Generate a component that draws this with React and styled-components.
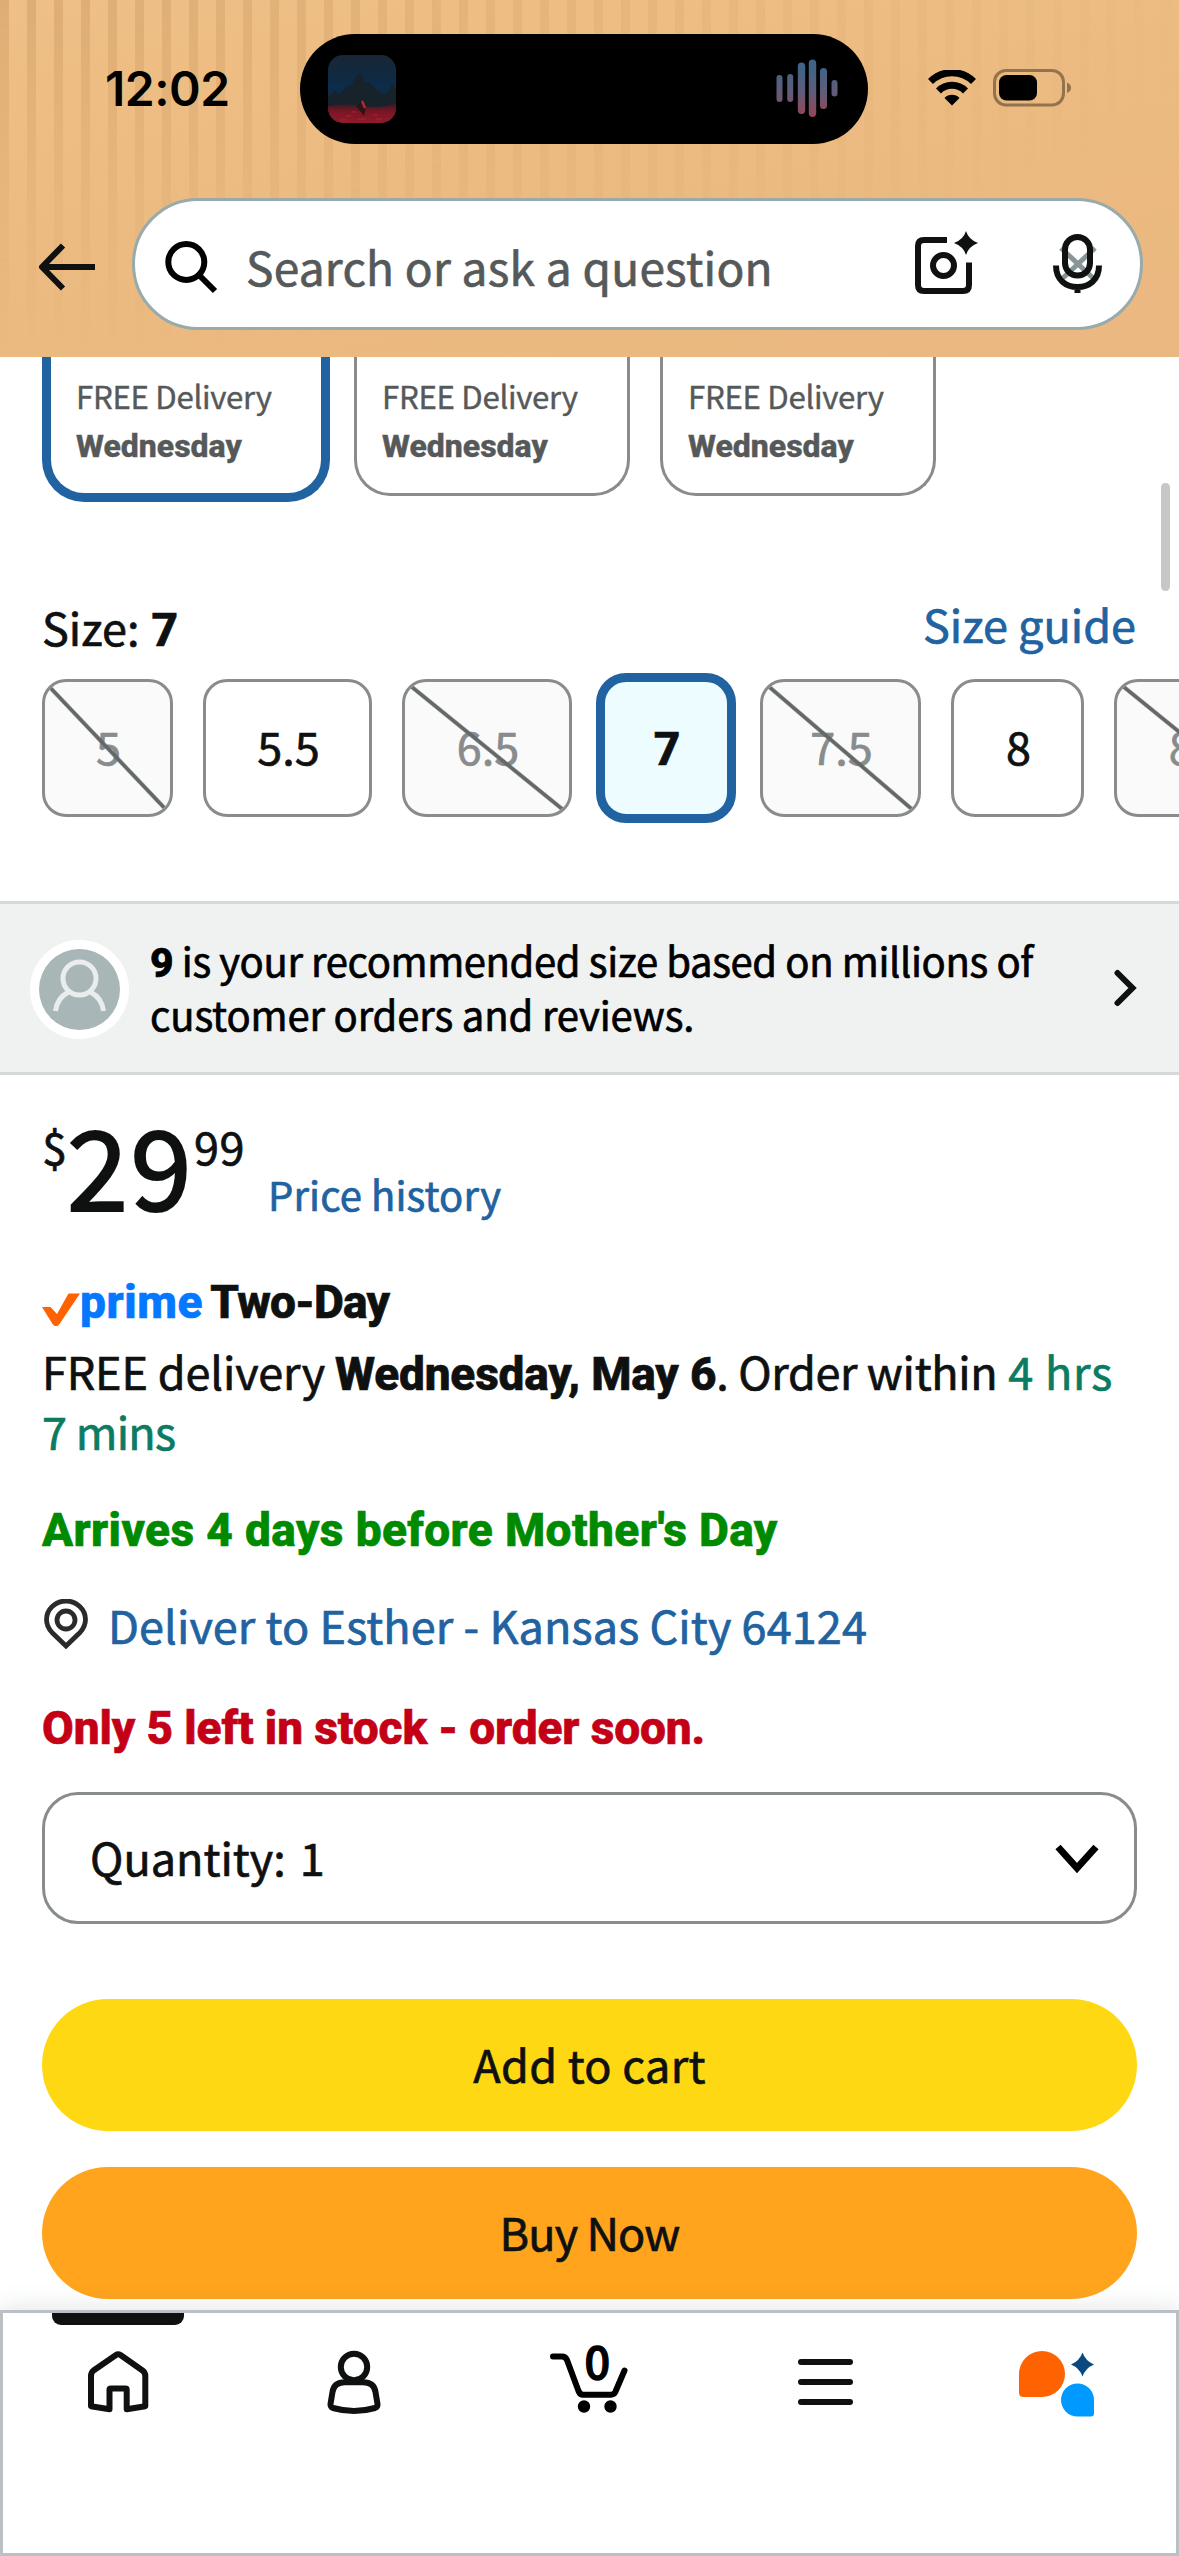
import React from 'react'
import styled, { createGlobalStyle, css } from 'styled-components'

const cards = [
  { id: 1, selected: true },
  { id: 2 },
  { id: 3 },
]

const sizes = [
  { label: '5', width: 131, unavailable: true },
  { label: '5.5', width: 169 },
  { label: '6.5', width: 170, unavailable: true },
  { label: '7', width: 128, selected: true },
  { label: '7.5', width: 161, unavailable: true },
  { label: '8', width: 133 },
  { label: '8.5', width: 170, unavailable: true },
]

// x centre, top, bottom and width of each bar
const waveBars = [
  [3.5, 16, 43, 6],
  [14.2, 15, 43, 6],
  [25.5, 3.5, 55, 7.4],
  [36.5, 0.5, 58, 7.4],
  [47.5, 9, 50, 7],
  [58.5, 21, 37.5, 6],
]

function App() {
  return (
    <>
      <GlobalStyle />
      <Screen>
        <Header>
          <StatusBar>
            <Clock>12:02</Clock>
            <Island>
              <AlbumArt />
              <Waveform />
            </Island>
            <Wifi />
            <Battery />
          </StatusBar>
          <SearchRow>
            <BackArrow />
            <SearchBox>
              <Magnifier />
              <Placeholder>Search or ask a question</Placeholder>
              <Camera />
              <Mic />
            </SearchBox>
          </SearchRow>
        </Header>

        <Cards>
          {cards.map(card => (
            <Card key={card.id} $selected={card.selected}>
              <CardText>FREE Delivery</CardText>
              <CardDay>Wednesday</CardDay>
            </Card>
          ))}
        </Cards>

        <SizeHeading>
          <SizeLabel>Size: <Bold>7</Bold></SizeLabel>
          <SizeGuide>Size guide</SizeGuide>
        </SizeHeading>
        <Sizes>
          {sizes.map(size => (
            <Size
              key={size.label}
              $width={size.width}
              $selected={size.selected}
              $unavailable={size.unavailable}
            >
              {size.label}
            </Size>
          ))}
        </Sizes>

        <Recommendation>
          <Avatar />
          <RecommendationText>
            <FirstLine><Bold>9</Bold> is your recommended size based on millions of</FirstLine>
            <SecondLine>customer orders and reviews.</SecondLine>
          </RecommendationText>
          <ChevronRight />
        </Recommendation>

        <Buybox>
          <Price>
            <Currency>$</Currency>
            <Whole>29</Whole>
            <Cents>99</Cents>
            <PriceHistory>Price history</PriceHistory>
          </Price>
          <PrimeLine>
            <PrimeCheck />
            <PrimeWord>prime</PrimeWord>
            <TwoDay>Two-Day</TwoDay>
          </PrimeLine>
          <Delivery>
            FREE delivery <Bold>Wednesday, May 6</Bold>
            <Within>. Order within</Within> <Countdown><Hours>4 hrs</Hours><br />7 mins</Countdown>
          </Delivery>
          <Arrives>Arrives 4 days before Mother's Day</Arrives>
          <Address>
            <Pin />
            Deliver to Esther - Kansas City 64124
          </Address>
          <Stock>Only 5 left in stock - order soon.</Stock>
          <Quantity>
            <span>Quantity:</span>
            <Amount>1</Amount>
            <ChevronDown />
          </Quantity>
          <CartButton>Add to cart</CartButton>
          <BuyButton>Buy Now</BuyButton>
        </Buybox>

        <TabBar>
          <Tabs>
            <Tab $active><HomeIcon /></Tab>
            <Tab><UserIcon /></Tab>
            <Tab>
              <CartIcon />
              <CartCount>0</CartCount>
            </Tab>
            <Tab><MenuIcon /></Tab>
            <Tab><AssistantIcon /></Tab>
          </Tabs>
        </TabBar>
        <Scrollbar />
      </Screen>
    </>
  )
}

export default App

function AlbumArt() {
  return (
    <svg width="68" height="68" viewBox="0 0 68 68">
      <defs>
        <linearGradient id="sky" x1="0" y1="0" x2="0" y2="1">
          <stop offset="0" stopColor="#182634" />
          <stop offset="0.45" stopColor="#0c2c48" />
          <stop offset="1" stopColor="#14293a" />
        </linearGradient>
        <linearGradient id="ground" x1="0" y1="0" x2="0" y2="1">
          <stop offset="0" stopColor="#3c1a25" />
          <stop offset="0.4" stopColor="#7b1624" />
          <stop offset="1" stopColor="#8f1a2c" />
        </linearGradient>
        <clipPath id="art"><rect width="68" height="68" rx="15" /></clipPath>
      </defs>
      <g clipPath="url(#art)">
        <rect width="68" height="68" fill="url(#sky)" />
        <path d="M0 42 L7 36 L12 40 L18 32 L24 29 L29 20 L33 17 L37 27 L42 28 L48 35 L54 38 L59 39 L64 29 L68 34 V55 H0Z" fill="#17222b" />
        <path d="M0 51 Q20 48 34 51 T68 49 V68 H0Z" fill="url(#ground)" />
        <path d="M28 51 L34 46 L38 51 L36 61 L32 56Z" fill="#2c141b" />
        <path d="M34 46 L37 53" stroke="#b52a2e" strokeWidth="2.5" />
        <path d="M18 61h5M30 64h8M45 60h5M24 57h4M12 65h6M48 64h6" stroke="#a92533" strokeWidth="1.2" />
      </g>
    </svg>
  )
}

function Waveform() {
  return (
    <svg width="62" height="60" viewBox="0 0 62 60">
      <defs>
        <linearGradient id="wave" gradientUnits="userSpaceOnUse" x1="0" y1="0" x2="0" y2="58">
          <stop offset="0.2" stopColor="#426384" />
          <stop offset="0.55" stopColor="#5f5d7a" />
          <stop offset="1" stopColor="#994357" />
        </linearGradient>
      </defs>
      {waveBars.map(([x, top, bottom, w]) => (
        <rect key={x} x={x - w / 2} y={top} width={w} height={bottom - top} rx={w / 2} fill="url(#wave)" />
      ))}
    </svg>
  )
}

function Wifi() {
  return (
    <WifiSvg width="48" height="36" viewBox="0 0 48 36">
      <path d="M2.5 12.5 A30.5 30.5 0 0 1 45.5 12.5" transform="translate(0 -1)" fill="none" stroke="#000" strokeWidth="7" />
      <path d="M10.5 21 A19 19 0 0 1 37.5 21" fill="none" stroke="#000" strokeWidth="7" />
      <path d="M24 35.5 L16.5 28 A10.5 10.5 0 0 1 31.5 28Z" />
    </WifiSvg>
  )
}

function Battery() {
  return (
    <BatterySvg width="79" height="38" viewBox="0 0 79 38">
      <rect x="1.5" y="1.5" width="69" height="34.5" rx="11.5" fill="none" stroke="#93734e" strokeWidth="3" />
      <rect x="6" y="6" width="38" height="25.5" rx="7.5" />
      <path d="M74 13.5 Q78 15 78 18.8 Q78 22.5 74 24Z" fill="#93734e" />
    </BatterySvg>
  )
}

function BackArrow() {
  return (
    <BackSvg width="58" height="48" viewBox="0 0 58 48" fill="none" stroke="#0f1111" strokeWidth="6">
      <path d="M57 24 H4 M25 2.5 L4 24 L25 45.5" strokeLinejoin="round" />
    </BackSvg>
  )
}

function Magnifier() {
  return (
    <MagnifierSvg width="54" height="54" viewBox="0 0 54 54" fill="none" stroke="#000" strokeWidth="6">
      <circle cx="21.3" cy="22" r="18" />
      <path d="M34 35 L50 51" />
    </MagnifierSvg>
  )
}

function Camera() {
  return (
    <CameraSvg width="66" height="66" viewBox="0 0 66 66" fill="none" stroke="#0f1111" strokeWidth="6">
      <path d="M32 9 H9 Q3 9 3 15 V54 Q3 60 9 60 H48 Q54 60 54 54 V31.5" />
      <circle cx="28.5" cy="34.5" r="10.5" />
      <path d="M51 0 Q53.5 8.5 63 12 Q53.5 15.5 51 24 Q48.5 15.5 39 12 Q48.5 8.5 51 0Z" fill="#0f1111" stroke="none" />
    </CameraSvg>
  )
}

function Mic() {
  return (
    <MicSvg width="50" height="60" viewBox="0 0 50 60" fill="none">
      <path d="M8 14 L40 44 M42 14 L10 44" stroke="#879596" strokeWidth="5" />
      <rect x="12" y="3" width="25" height="38.5" rx="12.5" stroke="#0f1111" strokeWidth="6" />
      <path d="M3 31.5 C3 46 13 53 24.5 53 S46 46 46 31.5 M24.5 52 V59" stroke="#0f1111" strokeWidth="6" />
    </MicSvg>
  )
}

function Avatar() {
  return (
    <AvatarSvg width="99" height="99" viewBox="0 0 99 99" fill="none">
      <circle cx="49.5" cy="49.5" r="49.5" fill="#fff" />
      <circle cx="49.5" cy="49.5" r="40.5" fill="#a9b6b7" />
      <g stroke="#e9eded" strokeWidth="5">
        <circle cx="49.5" cy="38.5" r="16.5" />
        <path d="M25.5 71 Q27 58 38.5 52 M73.5 71 Q72 58 60.5 52" />
      </g>
    </AvatarSvg>
  )
}

function ChevronRight() {
  return (
    <svg width="23" height="38" viewBox="0 0 23 38" fill="none" stroke="#0f1111" strokeWidth="6" strokeLinecap="round">
      <path d="M3.5 4 L18.5 19 L3.5 34" />
    </svg>
  )
}

function ChevronDown() {
  return (
    <ChevronSvg width="44" height="30" viewBox="0 0 44 30" fill="none" stroke="#000" strokeWidth="7">
      <path d="M3 3 L22 24 L41 3" />
    </ChevronSvg>
  )
}

function PrimeCheck() {
  return (
    <CheckSvg width="39" height="34" viewBox="0 0 39 34">
      <path d="M0 14 H8.5 L15 21 L26.5 0.5 H38 L17.5 31 Q14 35.5 10.5 31Z" fill="#ff6200" />
    </CheckSvg>
  )
}

function Pin() {
  return (
    <PinSvg width="44" height="50" viewBox="0 0 44 50" fill="none" stroke="#2b2b2b" strokeWidth="4.8">
      <path d="M22 47 L8 33.5 Q2.5 27.5 2.5 20.5 A19.5 18.5 0 0 1 41.5 20.5 Q41.5 27.5 36 33.5Z" />
      <circle cx="22" cy="21" r="9" />
    </PinSvg>
  )
}

function HomeIcon() {
  return (
    <TabSvg viewBox="0 0 80 80">
      <path d="M42.5 15 L64.5 30.5 Q67.3 32.5 67.3 36 V66.3 L48.7 69.3 V49.5 Q48.7 48.5 47.5 48.5 H33 Q31.5 48.5 31.5 49.5 V69.3 L13 66.3 V36 Q13 32.5 15.5 30.5 L38 15 Q40 13.5 42.5 15Z" />
    </TabSvg>
  )
}

function UserIcon() {
  return (
    <TabSvg viewBox="0 0 80 80">
      <circle cx="40" cy="27" r="13.2" />
      <path d="M31 42.3 H49 Q60 42.3 61.5 52 L63.5 64 Q63.8 67 61 68 Q40 74 19 68 Q16.3 67 16.5 64 L18.5 52 Q20 42.3 31 42.3Z" />
    </TabSvg>
  )
}

function CartIcon() {
  return (
    <TabSvg viewBox="0 0 80 80" $color="#000">
      <path d="M4 16.5 H13 Q16.5 16.5 18 20 L29.5 51 Q31 54.7 34 54.7 H62 Q65 54.7 66.3 52 L75.5 30.5" />
      <circle cx="35" cy="66.5" r="3.2" />
      <circle cx="61.5" cy="66.5" r="3.2" />
    </TabSvg>
  )
}

function MenuIcon() {
  return (
    <TabSvg viewBox="0 0 80 80">
      <path d="M16 22 H65 M16 42 H65 M16 62 H65" />
    </TabSvg>
  )
}

function AssistantIcon() {
  return (
    <AssistantSvg viewBox="0 0 80 80">
      <path d="M-2 34 A23 23 0 1 1 21 57 H2.5 Q-2 57 -2 52.5Z" fill="#ff6200" />
      <path d="M61.5 12.5 Q64.5 21 73 24.5 Q64.5 28 61.5 36.5 Q58.5 28 50 24.5 Q58.5 21 61.5 12.5Z" fill="#0a4a80" />
      <path d="M73 60 A16.5 16.5 0 1 0 56.5 76.5 H70 Q73 76.5 73 73.5Z" fill="#0099ff" />
    </AssistantSvg>
  )
}

const GlobalStyle = createGlobalStyle`
  body {
    margin: 0;
    background: #fff;
  }

  * {
    box-sizing: border-box;
  }

  svg {
    display: block;
    flex: none;
  }
`

const Screen = styled.div`
  position: relative;
  display: flex;
  flex-direction: column;
  width: 1179px;
  height: 2556px;
  overflow: hidden;
  background: #fff;
  color: #0f1111;
  font-family: "Noto Sans CJK SC", "Open Sans", sans-serif;
  font-size: 45px;
  line-height: 60px;
  white-space: nowrap;
  -webkit-text-stroke: 0.7px currentColor;
`

const heavy = css`
  font-family: Roboto, sans-serif;
  font-weight: 800;
  font-size: 46px;
`

const Bold = styled.b`
  font-family: Roboto, sans-serif;
  font-weight: 800;
  font-size: 1.022em;
  line-height: 0;
`

const Header = styled.header`
  position: relative;
  flex: none;
  height: 357px;
  background: linear-gradient(170deg, #eebf86 0%, #ecbb81 45%, #eab880 100%);

  &::before {
    content: "";
    position: absolute;
    inset: 0;
    background: repeating-linear-gradient(90deg, #d8a66e 0 9px, transparent 9px 27px);
    mask-image: radial-gradient(ellipse 1220px 350px at 0 0, rgba(0, 0, 0, 0.72), rgba(0, 0, 0, 0.3) 50%, transparent);
  }
`

const StatusBar = styled.div`
  position: relative;
  display: flex;
  align-items: center;
  height: 178px;
`

const Clock = styled.div`
  width: 300px;
  padding-left: 105px;
  font-family: Inter, sans-serif;
  font-size: 48px;
  font-weight: 600;
  letter-spacing: -0.5px;
  color: #000;
  -webkit-text-stroke: 0;
`

const Island = styled.div`
  display: flex;
  align-items: center;
  justify-content: space-between;
  width: 568px;
  height: 110px;
  padding: 0 30px 0 28px;
  border-radius: 55px;
  background: #000;
`

const WifiSvg = styled.svg`
  margin: 0 0 3px 60px;
`

const BatterySvg = styled.svg`
  margin: 0 0 3px 17px;
`

const SearchRow = styled.div`
  position: relative;
  display: flex;
  align-items: center;
  margin-top: 20px;
  padding: 0 36px 0 38px;
`

const BackSvg = styled.svg`
  margin: 6px 36px 0 0;
`

const SearchBox = styled.div`
  flex: 1;
  display: flex;
  align-items: center;
  height: 132px;
  padding-left: 30px;
  border: 3px solid #97abac;
  border-radius: 66px;
  background: #fff;
`

const MagnifierSvg = styled.svg`
  margin-top: 5px;
`

const Placeholder = styled.div`
  width: 693px;
  padding: 4px 0 0 27px;
  font-size: 46px;
  letter-spacing: 0.25px;
  color: #565959;
`

const CameraSvg = styled.svg`
  margin: 0 0 1px 3px;
`

const MicSvg = styled.svg`
  margin-left: 72px;
`

const Cards = styled.div`
  flex: none;
  display: flex;
  gap: 30px;
  height: 148px;
  padding-left: 48px;
  overflow: hidden;
`

const Card = styled.div`
  width: 276px;
  height: 139px;
  padding: 15px 25px 0;
  border: 3px solid #888c8c;
  border-top: 0;
  border-radius: 0 0 36px 36px;
  color: #565959;
  font-size: 31.2px;
  line-height: 48px;
  -webkit-text-stroke: 0.4px currentColor;

  ${p => p.$selected && css`
    width: 288px;
    height: 145px;
    margin: 0 -6px;
    border-width: 0 9px 9px;
    border-color: #2162a1;
    border-radius: 0 0 42px 42px;
  `}
`

const CardText = styled.div`
  letter-spacing: -0.3px;
`

const CardDay = styled.div`
  font-family: Roboto, sans-serif;
  font-weight: 800;
  font-size: 32px;
  padding-top: 2px;
`

const SizeHeading = styled.div`
  display: flex;
  justify-content: space-between;
  height: 86px;
  margin-top: 89px;
  margin-bottom: -1px;
  padding: 0 43px 0 42px;
`

const SizeLabel = styled.div`
  padding-top: 3px;
  word-spacing: 2px;
`

const SizeGuide = styled.a`
  color: #2162a1;
`

const Sizes = styled.div`
  display: flex;
  gap: 30px;
  height: 138px;
  padding-left: 42px;
`

const Size = styled.div`
  position: relative;
  flex: none;
  display: flex;
  align-items: center;
  justify-content: center;
  width: ${p => p.$width}px;
  height: 138px;
  padding: 0 0 4px 2px;
  border: 3px solid #888c8c;
  border-radius: 24px;

  ${p => p.$selected && css`
    ${heavy}
    width: ${p.$width + 12}px;
    height: 150px;
    margin: -6px;
    padding-top: 5px;
    border: 9px solid #2162a1;
    border-radius: 30px;
    background: #edfdff;
  `}

  ${p => p.$unavailable && css`
    overflow: hidden;
    background: #fafafa;
    color: #888c8c;

    &::after {
      content: "";
      position: absolute;
      inset: -3px;
      background: linear-gradient(to top right, transparent calc(50% - 2.6px), #656868 calc(50% - 1.3px), #656868 calc(50% + 1.3px), transparent calc(50% + 2.6px));
    }
  `}
`

const Recommendation = styled.div`
  flex: none;
  display: flex;
  align-items: center;
  height: 174px;
  margin-top: 84px;
  padding: 0 42px 0 30px;
  border-top: 3px solid #d5d9d9;
  border-bottom: 3px solid #d5d9d9;
  background: #f0f2f2;
`

const AvatarSvg = styled.svg`
  margin-top: 3px;
`

const RecommendationText = styled.div`
  flex: 1;
  padding: 0 0 3px 21px;
  font-size: 40px;
  line-height: 54px;
  color: #000;
`

const FirstLine = styled.div`
  letter-spacing: -0.38px;
`

const SecondLine = styled.div`
  letter-spacing: -0.15px;
`

const Buybox = styled.main`
  display: flex;
  flex-direction: column;
  padding: 0 42px;
`

const Price = styled.div`
  display: flex;
  align-items: flex-start;
  height: 110px;
  margin-top: 33px;
`

const Currency = styled.span`
  width: 25px;
  margin-top: 8px;
`

const Whole = styled.span`
  font-size: 110px;
  line-height: 110px;
  letter-spacing: 2.5px;
  -webkit-text-stroke: 2.2px currentColor;
`

const Cents = styled.span`
  margin-top: 8px;
  letter-spacing: 0.5px;
`

const PriceHistory = styled.a`
  margin: 56px 0 0 23px;
  font-size: 40px;
  letter-spacing: 0.1px;
  color: #2162a1;
`

const PrimeLine = styled.div`
  ${heavy}
  display: flex;
  height: 60px;
  margin-top: 54px;
`

const CheckSvg = styled.svg`
  margin-top: 21px;
`

const PrimeWord = styled.span`
  margin-left: -1px;
  letter-spacing: 0.6px;
  color: #0578ff;
`

const TwoDay = styled.span`
  margin-left: 7px;
  letter-spacing: -0.7px;
`

const Delivery = styled.div`
  margin-top: 9px;
  letter-spacing: -0.15px;
`

const Within = styled.span`
  letter-spacing: -0.35px;
`

const Countdown = styled.span`
  margin-left: 1px;
  letter-spacing: -0.7px;
  color: #0b7b61;
`

const Hours = styled.span`
  letter-spacing: 0.8px;
`

const Arrives = styled.div`
  ${heavy}
  margin-top: 39px;
  letter-spacing: 0.4px;
  color: #008a00;
`

const Address = styled.a`
  display: flex;
  margin-top: 35px;
  letter-spacing: 0.1px;
  color: #2162a1;
`

const PinSvg = styled.svg`
  margin: 4px 20px 0 2px;
`

const Stock = styled.div`
  ${heavy}
  margin-top: 43px;
  letter-spacing: -0.1px;
  color: #c40016;
`

const Quantity = styled.div`
  display: flex;
  align-items: center;
  height: 132px;
  margin-top: 34px;
  padding: 0 35px 3px 45px;
  border: 3px solid #888c8c;
  border-radius: 36px;
`

const Amount = styled.span`
  flex: 1;
  margin-left: 14px;
`

const ChevronSvg = styled.svg`
  margin-top: 5px;
`

const Button = styled.button`
  height: 132px;
  padding: 0 0 3px;
  border: 0;
  border-radius: 66px;
  color: #0f1111;
  font: inherit;
  text-align: center;
  -webkit-text-stroke: inherit;
`

const CartButton = styled(Button)`
  margin-top: 75px;
  letter-spacing: 0.3px;
  background: #ffd814;
`

const BuyButton = styled(Button)`
  margin-top: 36px;
  letter-spacing: -0.9px;
  background: #ffa41c;
`

const TabBar = styled.nav`
  flex: none;
  height: 246px;
  margin-top: 11px;
  border: 3px solid #bbc0c4;
  background: #fff;
  box-shadow: 0 0 24px rgba(100, 125, 130, 0.22);
`

const Tabs = styled.div`
  display: grid;
  grid-template-columns: repeat(5, 1fr);
  margin: 0 -3px;
`

const Tab = styled.div`
  position: relative;
  display: flex;
  justify-content: center;
  padding-top: 27px;

  ${p => p.$active && css`
    &::before {
      content: "";
      position: absolute;
      top: 0;
      left: 52px;
      width: 132px;
      height: 12px;
      border-radius: 0 0 9px 9px;
      background: #0f1111;
    }
  `}
`

const TabSvg = styled.svg`
  width: 80px;
  height: 80px;
  fill: none;
  stroke: ${p => p.$color || '#0f1111'};
  stroke-width: 6;
  stroke-linejoin: round;
  stroke-linecap: round;
`

const AssistantSvg = styled.svg`
  width: 80px;
  height: 80px;
  overflow: visible;
`

const CartCount = styled.span`
  position: absolute;
  top: 17px;
  left: 113px;
  font-weight: 500;
  font-size: 45px;
  line-height: 60px;
  color: #000;
  -webkit-text-stroke: 1.3px #000;
`

const Scrollbar = styled.div`
  position: absolute;
  top: 483px;
  right: 9px;
  width: 9px;
  height: 108px;
  border-radius: 5px;
  background: #c7c7c7;
`
